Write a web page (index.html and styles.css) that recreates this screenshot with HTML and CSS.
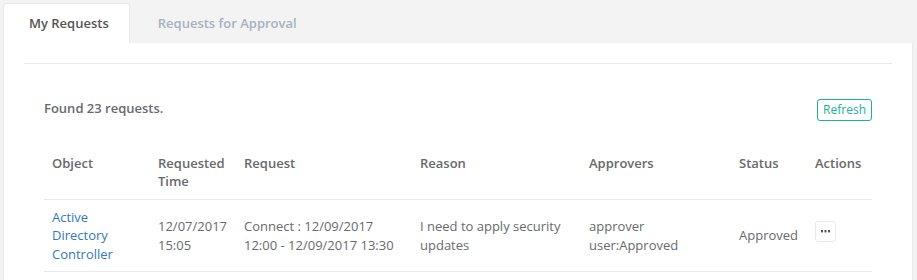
FILE: index.html
```html
<!DOCTYPE html>
<html>
<head>
<meta charset="utf-8">
<link rel="stylesheet" href="styles.css">
</head>
<body>
<div class="page">
  <ul class="tabs">
    <li class="tab active">My Requests</li>
    <li class="tab">Requests for Approval</li>
  </ul>
  <div class="panel">
    <div class="divider"></div>
    <div class="content">
      <div class="toolbar">
        <span class="found">Found 23 requests.</span>
        <button class="refresh">Refresh</button>
      </div>
      <table class="grid">
        <colgroup>
          <col style="width:106px"><col style="width:86px"><col style="width:176px"><col style="width:169px"><col style="width:150px"><col style="width:76px"><col style="width:65px">
        </colgroup>
        <thead>
          <tr><th>Object</th><th>Requested Time</th><th>Request</th><th>Reason</th><th>Approvers</th><th>Status</th><th>Actions</th></tr>
        </thead>
        <tbody>
          <tr>
            <td><a class="link" href="#">Active Directory Controller</a></td>
            <td>12/07/2017 15:05</td>
            <td>Connect : 12/09/2017 12:00 - 12/09/2017 13:30</td>
            <td>I need to apply security updates</td>
            <td>approver user:Approved</td>
            <td>Approved</td>
            <td><button class="more"><svg width="9" height="3" viewBox="0 0 9 3"><rect x="0" y="0" width="2" height="2.4" fill="#555"/><rect x="3.5" y="0" width="2" height="2.4" fill="#555"/><rect x="7" y="0" width="2" height="2.4" fill="#555"/></svg></button></td>
          </tr>
        </tbody>
      </table>
    </div>
  </div>
</div>
</body>
</html>
```
FILE: styles.css
```css
html, body { margin: 0; padding: 0; }
body {
  background: #f3f3f4;
  font-family: "Open Sans", "Liberation Sans", sans-serif;
  font-size: 13px;
  line-height: 1.42857;
  color: #676a6c;
}
.page { padding: 3px 4px 0 3px; }
.tabs {
  list-style: none;
  margin: 0;
  padding: 0;
  display: flex;
}
.tab {
  padding: 10px 20px 10px 25px;
  margin-right: 2px;
  font-weight: 600;
  color: #a7b1c2;
  border: 1px solid transparent;
  border-bottom: 0;
  border-radius: 4px 4px 0 0;
}
.tab.active {
  background: #fff;
  color: #555;
  border-color: #e7eaec;
}
.panel {
  background: #fff;
  border: 1px solid #e7eaec;
  border-top: 0;
  padding: 20px 20px 40px 20px;
  height: 300px;
}
.divider { border-top: 1px solid #e7eaec; }
.content { padding: 35px 20px 0 20px; }
.toolbar {
  display: flex;
  justify-content: space-between;
  align-items: flex-start;
  height: 22px;
}
.found { font-weight: 600; }
.refresh {
  font-family: inherit;
  font-size: 12px;
  line-height: 18px;
  padding: 1px 5px;
  color: #1ab394;
  background: #fff;
  border: 1px solid #1ab394;
  border-radius: 3px;
}
.grid {
  margin-top: 25px;
  width: 100%;
  border-collapse: collapse;
  table-layout: fixed;
}
.grid th, .grid td {
  padding: 8px;
  text-align: left;
  vertical-align: middle;
}
.grid th {
  font-weight: 600;
  vertical-align: top;
  border-bottom: 1px solid #e7eaec;
}
.grid td { border-bottom: 1px solid #e7eaec; }
.link { color: #337ab7; text-decoration: none; }
.more {
  width: 21px;
  height: 21px;
  padding: 0;
  background: #fff;
  border: 1px solid #e7eaec;
  border-radius: 3px;
  display: flex;
  align-items: center;
  justify-content: center;
  margin-top: -8px;
}
```
